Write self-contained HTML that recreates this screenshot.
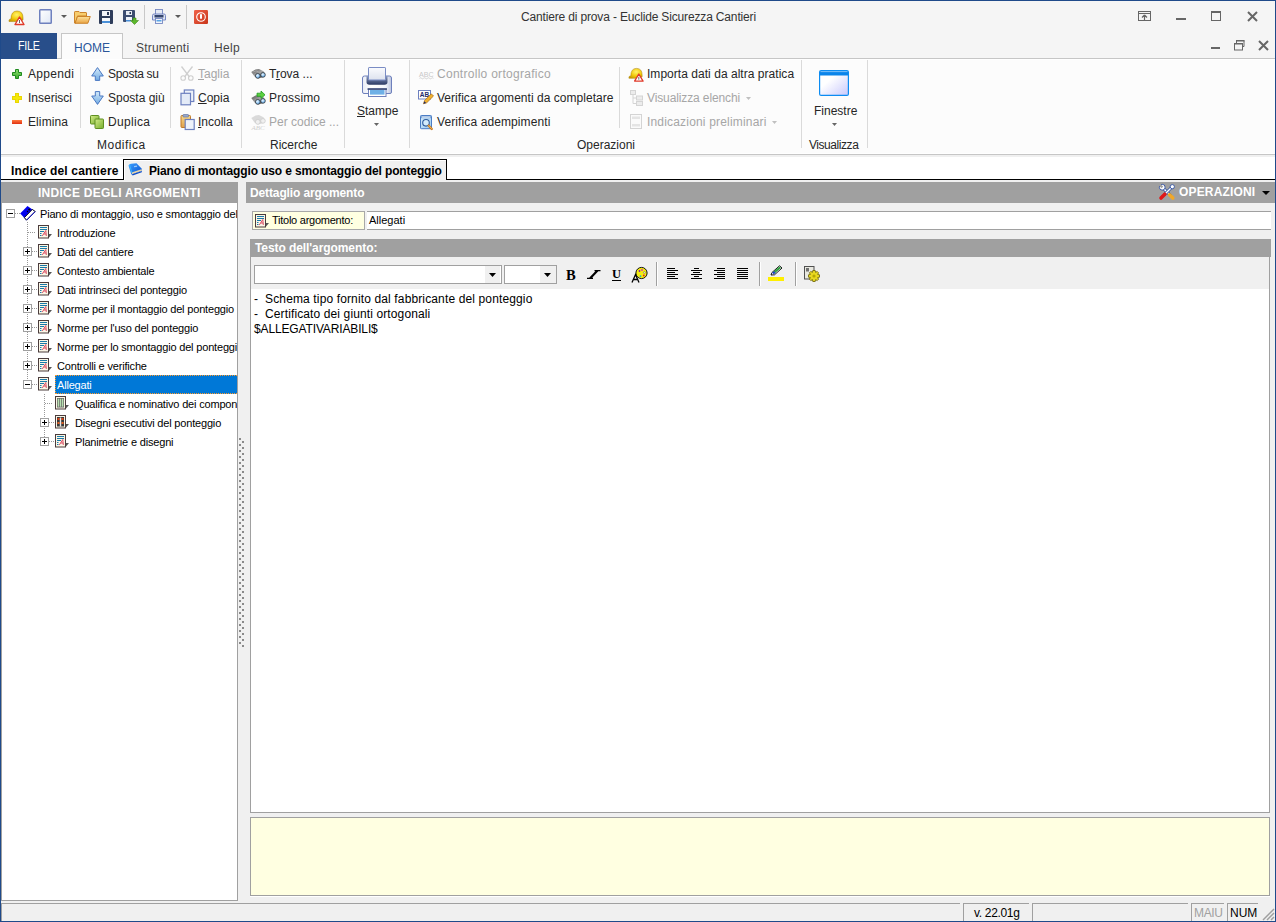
<!DOCTYPE html>
<html><head><meta charset="utf-8">
<style>
*{margin:0;padding:0;box-sizing:border-box}
html,body{width:1276px;height:922px;overflow:hidden;background:#f0f0f0;font-family:"Liberation Sans",sans-serif;font-size:12px;color:#000}
body{position:relative}
.a{position:absolute;white-space:nowrap}
.r{font-size:12px;line-height:14px;color:#262626}
.dis{color:#a6a6a6}
.t{font-size:11px;line-height:13px;color:#000}
.hb{font-size:12px;font-weight:bold;line-height:14px;color:#fff}
svg{position:absolute;overflow:visible}
.ln{position:absolute;background:#dadada}
</style></head><body>
<!-- title bar + tab row -->
<div class="a" style="left:0;top:0;width:1276px;height:58px;background:#f5f5f5"></div>
<!-- ribbon body -->
<div class="a" style="left:0;top:58px;width:1276px;height:97px;background:#fcfcfc;border-top:1px solid #c6c6c6;border-bottom:1px solid #c6c6c6;box-shadow:inset 0 1px 0 #fff, inset 0 -1px 0 #fff"></div>

<!-- QAT icons -->
<svg style="left:8px;top:10px" width="17" height="15" viewBox="0 0 17 15">
  <defs><radialGradient id="hg" cx="0.55" cy="0.35" r="0.7"><stop offset="0" stop-color="#fff36a"/><stop offset="0.6" stop-color="#f2c90a"/><stop offset="1" stop-color="#c89a00"/></radialGradient></defs>
  <path d="M1 10.5 Q1 9 3 9 Q3 1 9 1 Q15 1 15 8 L15 10 Q11 12 1 11.5Z" fill="url(#hg)" stroke="#b08a10" stroke-width="0.6"/>
  <path d="M11.5 7 L16 14.5 L7 14.5Z" fill="#fff" stroke="#e03a2a" stroke-width="1.4" stroke-linejoin="round"/>
  <rect x="11" y="10" width="1" height="3" fill="#666"/>
</svg>
<svg style="left:39px;top:9px" width="13" height="15" viewBox="0 0 13 15">
  <defs><linearGradient id="ng" x1="0" y1="0" x2="1" y2="1"><stop offset="0" stop-color="#ffffff"/><stop offset="1" stop-color="#dfe7f5"/></linearGradient></defs>
  <rect x="0.75" y="0.75" width="11.5" height="13.5" rx="0.8" fill="url(#ng)" stroke="#6e80be" stroke-width="1.5"/>
</svg>
<svg style="left:61px;top:15px" width="6" height="3" viewBox="0 0 6 3"><path d="M0 0H6L3 3Z" fill="#5a5a5a"/></svg>
<svg style="left:74px;top:11px" width="17" height="13" viewBox="0 0 17 13">
  <defs><linearGradient id="fg" x1="0" y1="0" x2="0" y2="1"><stop offset="0" stop-color="#fde29a"/><stop offset="1" stop-color="#e9a446"/></linearGradient></defs>
  <path d="M0.5 1.2 Q0.5 0.5 1.2 0.5 H5 L6 1.5 H12 Q12.5 1.5 12.5 2 V5 H3.5 L1.5 12 H0.5Z" fill="#f7cd6e" stroke="#c77a1e" stroke-width="0.9"/>
  <path d="M3.5 5.5 H16.3 L13.8 12.3 H1Z" fill="url(#fg)" stroke="#c77a1e" stroke-width="0.9" stroke-linejoin="round"/>
</svg>
<svg style="left:99px;top:10px" width="14" height="14" viewBox="0 0 14 14">
  <rect x="0" y="0" width="14" height="14" rx="1" fill="#2e3c5a"/>
  <rect x="3" y="1" width="8" height="5" fill="#f2f4f8"/><rect x="8" y="2" width="2" height="3" fill="#2e3c5a"/>
  <rect x="3" y="8" width="8" height="6" fill="#f6f8fb"/><rect x="3" y="11" width="8" height="2" fill="#4a90d8"/>
</svg>
<svg style="left:123px;top:10px" width="16" height="15" viewBox="0 0 16 15">
  <rect x="0" y="0" width="12" height="12" rx="1" fill="#3c4d70"/>
  <rect x="3" y="1" width="6" height="4" fill="#e8ecf3"/><rect x="6.5" y="2" width="1.5" height="2" fill="#2e3c5a"/>
  <rect x="3" y="7" width="6" height="5" fill="#f0f4fa"/><rect x="3" y="10" width="5" height="1.5" fill="#4a90d8"/>
  <path d="M10 8 H13 V10.5 H15.5 L11.5 14.5 L7.5 10.5 H10Z" fill="#5cb82c" stroke="#3f8a1a" stroke-width="0.6"/>
</svg>
<div class="ln" style="left:144px;top:5px;width:1px;height:24px;background:#c8c8c8"></div>
<svg style="left:152px;top:9px" width="14" height="15" viewBox="0 0 14 15">
  <rect x="3.5" y="0.5" width="7" height="6" fill="#e6ebf5" stroke="#7688c2" stroke-width="0.9"/>
  <path d="M0.5 6.5 Q0.5 5 2 5 H12 Q13.5 5 13.5 6.5 V11 H0.5Z" fill="#dfe5f3" stroke="#6b7ebe" stroke-width="0.9"/>
  <rect x="2.5" y="6" width="9" height="2.5" fill="#34456e"/>
  <rect x="3.5" y="9.5" width="7" height="5" fill="#f2f5fb" stroke="#7688c2" stroke-width="0.9"/>
  <rect x="4.5" y="11" width="5" height="1.5" fill="#5aa6e6"/>
</svg>
<svg style="left:175px;top:15px" width="6" height="3" viewBox="0 0 6 3"><path d="M0 0H6L3 3Z" fill="#5a5a5a"/></svg>
<div class="ln" style="left:186px;top:5px;width:1px;height:24px;background:#c8c8c8"></div>
<svg style="left:194px;top:10px" width="14" height="14" viewBox="0 0 14 14">
  <defs><linearGradient id="pg" x1="0" y1="0" x2="1" y2="1"><stop offset="0" stop-color="#f0624a"/><stop offset="1" stop-color="#c8361a"/></linearGradient></defs>
  <rect x="0" y="0" width="14" height="14" rx="1.2" fill="url(#pg)"/>
  <circle cx="7" cy="7" r="4.3" fill="none" stroke="#fff" stroke-width="1.1"/>
  <rect x="6" y="4.2" width="2" height="4.5" fill="#fff"/>
</svg>

<!-- window title -->
<div class="a" id="title" style="letter-spacing:-0.156px;left:521px;top:10px;font-size:12px;line-height:14px;color:#333">Cantiere di prova - Euclide Sicurezza Cantieri</div>

<!-- window controls -->
<svg style="left:1138px;top:11px" width="14" height="11" viewBox="0 0 14 11">
  <rect x="0.5" y="0.5" width="12" height="9" fill="none" stroke="#666" stroke-width="1"/>
  <rect x="0.5" y="2" width="12" height="1" fill="#666"/>
  <path d="M6.5 4 L4 6.5 M6.5 4 L9 6.5 M6.5 4 V10" stroke="#666" stroke-width="1.2" fill="none"/>
</svg>
<div class="a" style="left:1176px;top:18px;width:10px;height:2px;background:#666"></div>
<svg style="left:1211px;top:11px" width="10" height="10" viewBox="0 0 10 10">
  <rect x="0.5" y="0.5" width="9" height="9" fill="none" stroke="#666" stroke-width="1"/>
  <rect x="0" y="0" width="10" height="2" fill="#666"/>
</svg>
<svg style="left:1247px;top:11px" width="11" height="11" viewBox="0 0 11 11">
  <path d="M1 1 L10 10 M10 1 L1 10" stroke="#666" stroke-width="2"/>
</svg>

<!-- FILE tab -->
<div class="a" style="left:0;top:33px;width:57px;height:26px;background:#284e8a"></div>
<div class="a" style="letter-spacing:-0.3px;left:18px;top:39px;color:#fff;font-size:12.5px;line-height:14px;transform:scaleX(0.86);transform-origin:left">FILE</div>
<!-- HOME tab -->
<div class="a" style="left:61px;top:33px;width:62px;height:26px;background:#fcfcfc;border:1px solid #c6c6c6;border-bottom:none"></div>
<div class="a" style="left:74px;top:41px;color:#2b579a;font-size:12px;line-height:14px">HOME</div>
<div class="a r" style="letter-spacing:0.212px;left:136px;top:41px;color:#444">Strumenti</div>
<div class="a r" style="letter-spacing:0.3px;left:214px;top:41px;color:#444">Help</div>

<!-- MDI controls -->
<div class="a" style="left:1211px;top:47px;width:9px;height:2px;background:#666"></div>
<svg style="left:1234px;top:40px" width="11" height="11" viewBox="0 0 11 11">
  <path d="M2.5 3 V0.5 H10 V6.5 H8.5" fill="none" stroke="#666" stroke-width="1"/>
  <rect x="2" y="0" width="8.5" height="1.5" fill="#666"/>
  <rect x="0.5" y="3.5" width="8" height="6.5" fill="#f5f5f5" stroke="#666" stroke-width="1"/>
  <rect x="0" y="3" width="9" height="1.5" fill="#666"/>
</svg>
<svg style="left:1258px;top:40px" width="11" height="11" viewBox="0 0 11 11">
  <path d="M1 1 L10 10 M10 1 L1 10" stroke="#666" stroke-width="2"/>
</svg>

<!-- ribbon group separators -->
<div class="ln" style="left:241px;top:60px;width:1px;height:88px"></div>
<div class="ln" style="left:344px;top:60px;width:1px;height:88px"></div>
<div class="ln" style="left:409px;top:60px;width:1px;height:88px"></div>
<div class="ln" style="left:801px;top:60px;width:1px;height:88px"></div>
<div class="ln" style="left:867px;top:60px;width:1px;height:88px"></div>
<div class="ln" style="left:80px;top:67px;width:1px;height:61px"></div>
<div class="ln" style="left:170px;top:67px;width:1px;height:61px"></div>
<div class="ln" style="left:619px;top:67px;width:1px;height:61px"></div>

<!-- Appendi plus -->
<svg style="left:12px;top:69px" width="10" height="10" viewBox="0 0 10 10">
  <defs><linearGradient id="gp" x1="0" y1="0" x2="0" y2="1"><stop offset="0" stop-color="#8de070"/><stop offset="1" stop-color="#3aa82a"/></linearGradient></defs>
  <path d="M3.5 0.5H6.5V3.5H9.5V6.5H6.5V9.5H3.5V6.5H0.5V3.5H3.5Z" fill="url(#gp)" stroke="#1f8a1f" stroke-width="1"/>
</svg>
<svg style="left:12px;top:93px" width="10" height="10" viewBox="0 0 10 10">
  <path d="M3 0H7V3H10V7H7V10H3V7H0V3H3Z" fill="#f4e80a"/>
  <path d="M3.5 0.5H6.5V3.5H9.5V6.5H6.5V9.5H3.5V6.5H0.5V3.5H3.5Z" fill="none" stroke="#e0c800" stroke-width="0.6"/>
</svg>
<svg style="left:12px;top:120px" width="10" height="4" viewBox="0 0 10 4">
  <defs><linearGradient id="gm" x1="0" y1="0" x2="0" y2="1"><stop offset="0" stop-color="#ff7a40"/><stop offset="1" stop-color="#e03010"/></linearGradient></defs>
  <rect x="0" y="0" width="10" height="4" fill="url(#gm)"/>
</svg>
<!-- up / down arrows -->
<svg style="left:91px;top:67px" width="13" height="14" viewBox="0 0 13 14">
  <defs><linearGradient id="ga" x1="0" y1="0" x2="0" y2="1"><stop offset="0" stop-color="#d6ecfb"/><stop offset="1" stop-color="#6fa9e2"/></linearGradient></defs>
  <path d="M6.5 0.6 L12.3 9 H8.7 V13.4 H4.3 V9 H0.7Z" fill="url(#ga)" stroke="#4a78c2" stroke-width="1" stroke-linejoin="round"/>
</svg>
<svg style="left:91px;top:91px" width="13" height="14" viewBox="0 0 13 14">
  <path d="M4.3 0.6 H8.7 V5 H12.3 L6.5 13.4 L0.7 5 H4.3Z" fill="url(#ga)" stroke="#4a78c2" stroke-width="1" stroke-linejoin="round"/>
</svg>
<!-- duplica -->
<svg style="left:90px;top:115px" width="14" height="14" viewBox="0 0 14 14">
  <defs><linearGradient id="gd" x1="0" y1="0" x2="1" y2="1"><stop offset="0" stop-color="#d4ec8a"/><stop offset="1" stop-color="#76ad2c"/></linearGradient></defs>
  <rect x="0.5" y="0.5" width="8.5" height="8.5" rx="0.8" fill="url(#gd)" stroke="#5f8f22" stroke-width="1"/>
  <rect x="5" y="4" width="8.5" height="9.5" rx="0.8" fill="url(#gd)" stroke="#5f8f22" stroke-width="1"/>
</svg>
<!-- scissors (disabled) -->
<svg style="left:180px;top:66px" width="14" height="15" viewBox="0 0 14 15">
  <path d="M1.5 0.5 L9.5 11 M12.5 0.5 L4.5 11" stroke="#cfcfcf" stroke-width="1.3" fill="none"/>
  <circle cx="3.2" cy="12" r="2.3" fill="none" stroke="#cfcfcf" stroke-width="1.1"/>
  <circle cx="10.8" cy="12" r="2.3" fill="none" stroke="#cfcfcf" stroke-width="1.1"/>
</svg>
<!-- copy -->
<svg style="left:180px;top:89px" width="15" height="17" viewBox="0 0 15 17">
  <rect x="4.3" y="1" width="9.5" height="11.5" fill="#eef2fa" stroke="#6d80bf" stroke-width="1.2"/>
  <rect x="1" y="4.3" width="9.5" height="11.5" fill="#e4ebf7" stroke="#6d80bf" stroke-width="1.2"/>
</svg>
<!-- paste -->
<svg style="left:180px;top:114px" width="15" height="16" viewBox="0 0 15 16">
  <defs><linearGradient id="gc" x1="0" y1="0" x2="0" y2="1"><stop offset="0" stop-color="#f7d88a"/><stop offset="1" stop-color="#e0a04a"/></linearGradient></defs>
  <rect x="1" y="1.5" width="9.5" height="12" rx="0.8" fill="url(#gc)" stroke="#c07a2a" stroke-width="1"/>
  <rect x="3" y="0.5" width="5.5" height="2.5" rx="0.6" fill="#9aa8c8" stroke="#6478a8" stroke-width="0.7"/>
  <rect x="5.2" y="5.5" width="9" height="10" fill="#eef2fa" stroke="#6d80bf" stroke-width="1.2"/>
</svg>
<!-- binoculars -->
<svg style="left:251px;top:69px" width="15" height="10" viewBox="0 0 15 10">
  <defs><linearGradient id="gbn" x1="0" y1="0" x2="1" y2="1"><stop offset="0" stop-color="#505050"/><stop offset="0.5" stop-color="#a8a8a8"/><stop offset="1" stop-color="#404040"/></linearGradient>
  <radialGradient id="gln" cx="0.4" cy="0.35" r="0.7"><stop offset="0" stop-color="#e8f6ff"/><stop offset="1" stop-color="#5aa8ee"/></radialGradient></defs>
  <path d="M0.3 3 L4.5 0.6 L8 0 L12.5 2.2 L14.2 5 L13 8 L7 9.6 L3.5 7.5Z" fill="url(#gbn)"/>
  <path d="M1.5 3.2 L5 1.8 L7.5 2.8" stroke="#b8b8b8" stroke-width="0.7" fill="none"/>
  <circle cx="6.8" cy="6.9" r="2.4" fill="url(#gln)" stroke="#222" stroke-width="0.7"/>
  <circle cx="12" cy="5.9" r="2.3" fill="url(#gln)" stroke="#222" stroke-width="0.7"/>
</svg>
<svg style="left:251px;top:91px" width="15" height="14" viewBox="0 0 15 14">
  <path d="M0.3 7 L4.5 4.6 L8 4 L12.5 6.2 L14.2 9 L13 12 L7 13.6 L3.5 11.5Z" fill="url(#gbn)"/>
  <circle cx="6.8" cy="10.9" r="2.4" fill="url(#gln)" stroke="#222" stroke-width="0.7"/>
  <circle cx="12" cy="9.9" r="2.3" fill="url(#gln)" stroke="#222" stroke-width="0.7"/>
  <path d="M6 2.2 H10 V0 L14 3.8 L10 7.5 V5.3 H6Z" fill="#5ed040" stroke="#1f9a1f" stroke-width="0.8"/>
</svg>
<svg style="left:251px;top:115px" width="15" height="15" viewBox="0 0 15 15">
  <path d="M0.3 3 L4.5 0.6 L8 0 L12.5 2.2 L14.2 5 L13 8 L7 9.6 L3.5 7.5Z" fill="#dadada"/>
  <circle cx="6.8" cy="6.9" r="2.4" fill="#f0f0f0" stroke="#c8c8c8" stroke-width="0.7"/>
  <circle cx="12" cy="5.9" r="2.3" fill="#f0f0f0" stroke="#c8c8c8" stroke-width="0.7"/>
  <text x="0.5" y="14.5" font-family="Liberation Serif" font-size="7" font-style="italic" fill="#cfcfcf">ABC</text>
</svg>
<!-- big printer -->
<svg style="left:362px;top:67px" width="30" height="30" viewBox="0 0 30 30">
  <defs>
    <linearGradient id="gpb" x1="0" y1="0" x2="1" y2="0"><stop offset="0" stop-color="#e8ecf6"/><stop offset="0.3" stop-color="#ffffff"/><stop offset="0.8" stop-color="#f4f6fb"/><stop offset="1" stop-color="#b8c2de"/></linearGradient>
    <linearGradient id="gps" x1="0" y1="0" x2="0" y2="1"><stop offset="0" stop-color="#8a9ac0"/><stop offset="1" stop-color="#2a3862"/></linearGradient>
    <linearGradient id="gpp" x1="0" y1="0" x2="0" y2="1"><stop offset="0" stop-color="#fafbfe"/><stop offset="1" stop-color="#dde2ee"/></linearGradient>
  </defs>
  <path d="M0.5 11 Q0.5 9 2.5 9 H27.5 Q29.5 9 29.5 11 V25 Q29.5 26.5 28 26.5 H2 Q0.5 26.5 0.5 25Z" fill="url(#gpb)" stroke="#6e80bc" stroke-width="1"/>
  <path d="M4.5 9 H25.5 V15 Q25.5 17.8 22.5 17.8 H7.5 Q4.5 17.8 4.5 15Z" fill="url(#gps)"/>
  <rect x="6.5" y="0.5" width="17" height="12.5" rx="0.6" fill="url(#gpp)" stroke="#7a8cc4" stroke-width="1"/>
  <rect x="6.5" y="22" width="17.5" height="7.5" fill="#fff" stroke="#6e80bc" stroke-width="1"/>
  <rect x="8" y="23" width="14.5" height="4.6" fill="#6eb0e6"/>
  <rect x="5.5" y="21.3" width="19.5" height="1.5" fill="#34426e"/>
</svg>
<!-- ABC spell (disabled) -->
<svg style="left:419px;top:70px" width="15" height="9" viewBox="0 0 15 9">
  <text x="0" y="7" font-family="Liberation Sans" font-size="8" fill="#c8c8c8" textLength="14.5" lengthAdjust="spacingAndGlyphs">ABC</text>
  <path d="M0.5 8.3 q1 -1 2 0 t2 0 t2 0 t2 0 t2 0 t2 0 t2 0" stroke="#c8c8c8" stroke-width="0.8" fill="none"/>
</svg>
<!-- AB pencil -->
<svg style="left:418px;top:90px" width="16" height="15" viewBox="0 0 16 15">
  <rect x="0.5" y="0.5" width="12" height="8.5" fill="#fff" stroke="#6d80bf" stroke-width="1"/>
  <text x="1.8" y="7.3" font-family="Liberation Sans" font-weight="bold" font-size="6.5" fill="#1e2a6a">AB</text>
  <path d="M5.5 13.8 L6.5 10.6 L13.3 3.8 L15.5 6 L8.7 12.8Z" fill="#f0b030" stroke="#a86a10" stroke-width="0.7"/>
  <path d="M5.5 13.8 L6.3 11.2 L8.1 13Z" fill="#1e2a6a"/>
</svg>
<!-- verifica adempimenti -->
<svg style="left:420px;top:115px" width="14" height="16" viewBox="0 0 14 16">
  <defs><linearGradient id="gva" x1="0" y1="0" x2="1" y2="1"><stop offset="0" stop-color="#d8eefc"/><stop offset="1" stop-color="#9ccaf0"/></linearGradient></defs>
  <rect x="0.5" y="0.5" width="11" height="13.2" rx="0.8" fill="url(#gva)" stroke="#4a7cc4" stroke-width="1"/>
  <rect x="1" y="1" width="10" height="2.2" fill="#7aa4d8"/><rect x="1.8" y="1.6" width="8.4" height="0.9" fill="#fff"/>
  <circle cx="6" cy="7.8" r="3.3" fill="#d4ecfc" stroke="#2e5a9a" stroke-width="1.1"/>
  <path d="M8.6 10.6 L11.8 14" stroke="#c8781e" stroke-width="2.2" stroke-linecap="round"/>
  <path d="M8.8 10.6 L11.4 13.4" stroke="#f4c060" stroke-width="0.9" stroke-linecap="round"/>
</svg>
<!-- helmet big -->
<svg style="left:628px;top:67px" width="16" height="15" viewBox="0 0 17 15">
  <path d="M1 10.5 Q1 9 3 9 Q3 1 9 1 Q15 1 15 8 L15 10 Q11 12 1 11.5Z" fill="url(#hg)" stroke="#b08a10" stroke-width="0.6"/>
  <path d="M11.5 7 L16 14.5 L7 14.5Z" fill="#fff" stroke="#e03a2a" stroke-width="1.4" stroke-linejoin="round"/>
  <rect x="11" y="10" width="1" height="3" fill="#666"/>
</svg>
<!-- tree icon disabled -->
<svg style="left:630px;top:90px" width="13" height="16" viewBox="0 0 13 16">
  <rect x="0.5" y="0.5" width="5" height="4" fill="#ececec" stroke="#d4d4d4" stroke-width="1"/>
  <rect x="6.5" y="6" width="6" height="4" fill="#ececec" stroke="#d4d4d4" stroke-width="1"/>
  <rect x="6.5" y="11.5" width="6" height="4" fill="#ececec" stroke="#d4d4d4" stroke-width="1"/>
  <path d="M3 4.5 V13.5 H6.5 M3 8 H6.5" stroke="#d4d4d4" stroke-width="1" fill="none"/>
</svg>
<!-- doc icon disabled -->
<svg style="left:630px;top:114px" width="12" height="15" viewBox="0 0 12 15">
  <rect x="0.5" y="0.5" width="11" height="14" fill="#fafafa" stroke="#d4d4d4" stroke-width="1"/>
  <rect x="2" y="2.5" width="8" height="2.5" fill="#e4e4e4"/>
  <rect x="2" y="10" width="8" height="2.5" fill="#e4e4e4"/>
</svg>
<!-- finestre -->
<svg style="left:819px;top:70px" width="30" height="26" viewBox="0 0 30 26">
  <defs><linearGradient id="gw" x1="0.2" y1="0.2" x2="1" y2="1"><stop offset="0.2" stop-color="#ffffff"/><stop offset="1" stop-color="#c8c8fc"/></linearGradient></defs>
  <rect x="0.6" y="0.6" width="28.8" height="24.8" rx="1.5" fill="url(#gw)" stroke="#0c8cf2" stroke-width="1.2"/>
  <rect x="1" y="1" width="28" height="4.5" fill="#0a84ea"/>
  <rect x="1.5" y="1.3" width="27" height="0.8" fill="#9fd0fa"/>
</svg>


<!-- ribbon labels -->
<div class="a r" style="letter-spacing:0.333px;left:28px;top:67px">Appendi</div>
<div class="a r" style="letter-spacing:0.0px;left:28px;top:91px">Inserisci</div>
<div class="a r" style="letter-spacing:0.1px;left:28px;top:115px">Elimina</div>
<div class="a r" style="letter-spacing:-0.3px;left:108px;top:67px">Sposta su</div>
<div class="a r" style="letter-spacing:0.0px;left:108px;top:91px">Sposta giù</div>
<div class="a r" style="letter-spacing:0.333px;left:108px;top:115px">Duplica</div>
<div class="a r dis" style="left:198px;top:67px"><u>T</u>aglia</div>
<div class="a r" style="left:198px;top:91px"><u>C</u>opia</div>
<div class="a r" style="left:198px;top:115px"><u>I</u>ncolla</div>
<div class="a r" style="letter-spacing:0.486px;left:97px;top:138px">Modifica</div>

<div class="a r" style="left:269px;top:67px">T<u>r</u>ova ...</div>
<div class="a r" style="letter-spacing:0.143px;left:269px;top:91px">Prossimo</div>
<div class="a r dis" style="letter-spacing:0.0px;left:269px;top:115px">Per codice ...</div>
<div class="a r" style="letter-spacing:0.0px;left:270px;top:138px">Ricerche</div>

<div class="a r" style="left:357px;top:104px"><u>S</u>tampe</div>
<svg style="left:374px;top:123px" width="5" height="3" viewBox="0 0 5 3"><path d="M0 0H5L2.5 3Z" fill="#666"/></svg>

<div class="a r dis" style="letter-spacing:0.28px;left:437px;top:67px">Controllo ortografico</div>
<div class="a r" style="letter-spacing:0.032px;left:437px;top:91px">Verifica argomenti da completare</div>
<div class="a r" style="letter-spacing:0.105px;left:437px;top:115px">Verifica adempimenti</div>
<div class="a r" style="letter-spacing:0.036px;left:647px;top:67px">Importa dati da altra pratica</div>
<div class="a r dis" style="letter-spacing:-0.118px;left:647px;top:91px">Visualizza elenchi</div>
<svg style="left:746px;top:97px" width="5" height="3" viewBox="0 0 5 3"><path d="M0 0H5L2.5 3Z" fill="#c0c0c0"/></svg>
<div class="a r dis" style="letter-spacing:0.182px;left:647px;top:115px">Indicazioni preliminari</div>
<svg style="left:772px;top:121px" width="5" height="3" viewBox="0 0 5 3"><path d="M0 0H5L2.5 3Z" fill="#c0c0c0"/></svg>
<div class="a r" style="letter-spacing:0.0px;left:577px;top:138px">Operazioni</div>

<div class="a r" style="letter-spacing:0.0px;left:814px;top:104px">Finestre</div>
<svg style="left:832px;top:123px" width="5" height="3" viewBox="0 0 5 3"><path d="M0 0H5L2.5 3Z" fill="#666"/></svg>
<div class="a r" style="letter-spacing:-0.444px;left:809px;top:138px">Visualizza</div>

<!-- doc tab strip -->
<div class="a" style="left:1px;top:157px;width:1274px;height:23px;background:#fff"></div>
<div class="a" style="left:1px;top:179px;width:1274px;height:1px;background:#000"></div>
<div class="a" style="left:123px;top:159px;width:324px;height:21px;background:#f0f0f0;border:1px solid #000;border-bottom:none;box-shadow:inset 1px 1px 0 #fff"></div>
<svg style="left:128px;top:163px" width="15" height="13" viewBox="0 0 15 13">
 <defs><linearGradient id="gbk" x1="0" y1="0" x2="1" y2="1"><stop offset="0" stop-color="#3aa0ff"/><stop offset="1" stop-color="#0a50d0"/></linearGradient></defs>
 <path d="M0.5 2.5 Q1.5 0.8 3 0.8 L8.5 0.3 L13.8 5.8 L13.5 8 L4.5 11.5 Q3.5 11.8 3.2 11Z" fill="url(#gbk)"/>
 <path d="M3.5 9.6 L13.5 6.2 L13.8 7.8 L4.2 11.2Z" fill="#e8d4a8"/>
 <path d="M4 11.3 L14 8 L13.8 9.3 L4.6 12.6Z" fill="#0a4ac8"/>
 <path d="M1.5 1.8 L4 10" stroke="#40c0ff" stroke-width="0.8"/>
 <rect x="6" y="2.8" width="3" height="1.2" fill="#9ccaf8" transform="rotate(-8 7 3)"/>
</svg>
<div class="a" style="letter-spacing:0.15px;left:11px;top:164px;font-size:12px;font-weight:bold;line-height:14px">Indice del cantiere</div>
<div class="a" style="letter-spacing:-0.135px;left:149px;top:164px;font-size:12px;font-weight:bold;line-height:14px">Piano di montaggio uso e smontaggio del ponteggio</div>

<!-- left panel -->
<div class="a" style="left:1px;top:182px;width:237px;height:21px;background:#a0a0a0"></div>
<div class="a hb" style="letter-spacing:0.26px;left:38px;top:186px">INDICE DEGLI ARGOMENTI</div>
<div class="a" style="left:1px;top:203px;width:237px;height:698px;background:#fff;border-left:1px solid #a0a0a0;border-right:1px solid #a0a0a0;border-bottom:1px solid #a0a0a0"></div>
<svg width="0" height="0" style="position:absolute;left:0;top:0"><defs>
<g id="docic"><rect x="0.5" y="0.5" width="10" height="12.5" fill="#fbf6e6" stroke="#4a3c3c" stroke-width="1"/>
<rect x="2" y="2" width="7" height="1" fill="#1a7aa8"/><rect x="2" y="4" width="7" height="1" fill="#1a7aa8"/><rect x="2" y="6" width="4" height="1" fill="#1a7aa8"/><rect x="2" y="8" width="1.5" height="1" fill="#1a7aa8"/><rect x="2" y="10" width="1.5" height="1" fill="#1a7aa8"/>
<path d="M4.3 11 L7.8 5.5 L8.3 11 M5.8 9 H8.2" stroke="#d8405a" stroke-width="0.9" fill="none"/>
<path d="M11 9 L14 9 L11 12.5Z" fill="#555"/></g>
<g id="gridic"><rect x="0.5" y="0.5" width="10" height="12.5" fill="#fbf6e6" stroke="#4a3c3c" stroke-width="1"/>
<rect x="2" y="2" width="7" height="9.5" fill="#666"/><rect x="2.7" y="2.7" width="1.4" height="8" fill="#b8e0b0"/><rect x="4.8" y="2.7" width="1.4" height="8" fill="#b8e0b0"/><rect x="6.9" y="2.7" width="1.4" height="8" fill="#b8e0b0"/>
<path d="M11 9 L14 9 L11 12.5Z" fill="#555"/></g>
<g id="drawic"><rect x="0.5" y="0.5" width="10" height="12.5" fill="#fbf6e6" stroke="#4a3c3c" stroke-width="1"/>
<rect x="2" y="2" width="7" height="9.5" fill="#3a3a3a"/><rect x="2.5" y="3" width="2" height="2" fill="#e04010"/><rect x="6.5" y="3" width="2" height="2" fill="#e04010"/><rect x="2.5" y="7" width="2" height="2" fill="#e86020"/><rect x="6.5" y="7" width="2" height="2" fill="#e86020"/><rect x="4.8" y="2.5" width="1.4" height="9" fill="#e8e8e8"/>
<path d="M11 9 L14 9 L11 12.5Z" fill="#555"/></g>
</defs></svg>
<div class="a" style="left:2px;top:203px;width:235px;height:697px;overflow:hidden">
<div class="a" style="left:25px;top:19px;width:1px;height:163px;background:repeating-linear-gradient(to bottom,#999 0 1px,transparent 1px 2px)"></div>
<div class="a" style="left:42px;top:191px;width:1px;height:48px;background:repeating-linear-gradient(to bottom,#999 0 1px,transparent 1px 2px)"></div>
<div class="a" style="left:13px;top:10px;width:5px;height:1px;background:repeating-linear-gradient(to right,#999 0 1px,transparent 1px 2px)"></div>
<div class="a" style="left:4px;top:6px;width:9px;height:9px;border:1px solid #a0a0a0;background:#fff"><div class="a" style="left:1px;top:3px;width:5px;height:1px;background:#000"></div></div>
<svg style="left:18px;top:2px" width="16" height="16" viewBox="0 0 16 16">
 <path d="M0.2 8.5 L7.5 1 L15.2 6.5 L6.5 15.2Z" fill="#0000f0"/>
 <path d="M12.3 4.4 L15.2 6.5 L6.5 15.2 L4.4 12.6Z" fill="#fff" stroke="#000" stroke-width="0.9" stroke-linejoin="round"/>
 <path d="M15.2 6.5 L6.5 15.2" stroke="#0000f0" stroke-width="0.8"/>
 <circle cx="9.2" cy="4.5" r="1" fill="#000"/><circle cx="7.5" cy="6.5" r="0.7" fill="#000"/>
</svg>
<div class="a t" id="tr0" style="letter-spacing:-0.18px;left:38px;top:5px">Piano di montaggio, uso e smontaggio del ponteggio</div>
<div class="a" style="left:26px;top:29px;width:8px;height:1px;background:repeating-linear-gradient(to right,#999 0 1px,transparent 1px 2px)"></div>
<svg style="left:36px;top:22px" width="15" height="14" viewBox="0 0 15 14"><use href="#docic"/></svg>
<div class="a t" id="tr1" style="letter-spacing:-0.18px;left:55px;top:24px">Introduzione</div>
<div class="a" style="left:30px;top:48px;width:6px;height:1px;background:repeating-linear-gradient(to right,#999 0 1px,transparent 1px 2px)"></div>
<div class="a" style="left:21px;top:44px;width:9px;height:9px;border:1px solid #a0a0a0;background:#fff"><div class="a" style="left:1px;top:3px;width:5px;height:1px;background:#000"></div><div class="a" style="left:3px;top:1px;width:1px;height:5px;background:#000"></div></div>
<svg style="left:36px;top:41px" width="15" height="14" viewBox="0 0 15 14"><use href="#docic"/></svg>
<div class="a t" id="tr2" style="letter-spacing:-0.18px;left:55px;top:43px">Dati del cantiere</div>
<div class="a" style="left:30px;top:67px;width:6px;height:1px;background:repeating-linear-gradient(to right,#999 0 1px,transparent 1px 2px)"></div>
<div class="a" style="left:21px;top:63px;width:9px;height:9px;border:1px solid #a0a0a0;background:#fff"><div class="a" style="left:1px;top:3px;width:5px;height:1px;background:#000"></div><div class="a" style="left:3px;top:1px;width:1px;height:5px;background:#000"></div></div>
<svg style="left:36px;top:60px" width="15" height="14" viewBox="0 0 15 14"><use href="#docic"/></svg>
<div class="a t" id="tr3" style="letter-spacing:-0.18px;left:55px;top:62px">Contesto ambientale</div>
<div class="a" style="left:30px;top:86px;width:6px;height:1px;background:repeating-linear-gradient(to right,#999 0 1px,transparent 1px 2px)"></div>
<div class="a" style="left:21px;top:82px;width:9px;height:9px;border:1px solid #a0a0a0;background:#fff"><div class="a" style="left:1px;top:3px;width:5px;height:1px;background:#000"></div><div class="a" style="left:3px;top:1px;width:1px;height:5px;background:#000"></div></div>
<svg style="left:36px;top:79px" width="15" height="14" viewBox="0 0 15 14"><use href="#docic"/></svg>
<div class="a t" id="tr4" style="letter-spacing:-0.18px;left:55px;top:81px">Dati intrinseci del ponteggio</div>
<div class="a" style="left:30px;top:105px;width:6px;height:1px;background:repeating-linear-gradient(to right,#999 0 1px,transparent 1px 2px)"></div>
<div class="a" style="left:21px;top:101px;width:9px;height:9px;border:1px solid #a0a0a0;background:#fff"><div class="a" style="left:1px;top:3px;width:5px;height:1px;background:#000"></div><div class="a" style="left:3px;top:1px;width:1px;height:5px;background:#000"></div></div>
<svg style="left:36px;top:98px" width="15" height="14" viewBox="0 0 15 14"><use href="#docic"/></svg>
<div class="a t" id="tr5" style="letter-spacing:-0.18px;left:55px;top:100px">Norme per il montaggio del ponteggio</div>
<div class="a" style="left:30px;top:124px;width:6px;height:1px;background:repeating-linear-gradient(to right,#999 0 1px,transparent 1px 2px)"></div>
<div class="a" style="left:21px;top:120px;width:9px;height:9px;border:1px solid #a0a0a0;background:#fff"><div class="a" style="left:1px;top:3px;width:5px;height:1px;background:#000"></div><div class="a" style="left:3px;top:1px;width:1px;height:5px;background:#000"></div></div>
<svg style="left:36px;top:117px" width="15" height="14" viewBox="0 0 15 14"><use href="#docic"/></svg>
<div class="a t" id="tr6" style="letter-spacing:-0.18px;left:55px;top:119px">Norme per l'uso del ponteggio</div>
<div class="a" style="left:30px;top:143px;width:6px;height:1px;background:repeating-linear-gradient(to right,#999 0 1px,transparent 1px 2px)"></div>
<div class="a" style="left:21px;top:139px;width:9px;height:9px;border:1px solid #a0a0a0;background:#fff"><div class="a" style="left:1px;top:3px;width:5px;height:1px;background:#000"></div><div class="a" style="left:3px;top:1px;width:1px;height:5px;background:#000"></div></div>
<svg style="left:36px;top:136px" width="15" height="14" viewBox="0 0 15 14"><use href="#docic"/></svg>
<div class="a t" id="tr7" style="letter-spacing:-0.18px;left:55px;top:138px">Norme per lo smontaggio del ponteggio</div>
<div class="a" style="left:30px;top:162px;width:6px;height:1px;background:repeating-linear-gradient(to right,#999 0 1px,transparent 1px 2px)"></div>
<div class="a" style="left:21px;top:158px;width:9px;height:9px;border:1px solid #a0a0a0;background:#fff"><div class="a" style="left:1px;top:3px;width:5px;height:1px;background:#000"></div><div class="a" style="left:3px;top:1px;width:1px;height:5px;background:#000"></div></div>
<svg style="left:36px;top:155px" width="15" height="14" viewBox="0 0 15 14"><use href="#docic"/></svg>
<div class="a t" id="tr8" style="letter-spacing:-0.18px;left:55px;top:157px">Controlli e verifiche</div>
<div class="a" style="left:30px;top:181px;width:6px;height:1px;background:repeating-linear-gradient(to right,#999 0 1px,transparent 1px 2px)"></div>
<div class="a" style="left:21px;top:177px;width:9px;height:9px;border:1px solid #a0a0a0;background:#fff"><div class="a" style="left:1px;top:3px;width:5px;height:1px;background:#000"></div></div>
<svg style="left:36px;top:174px" width="15" height="14" viewBox="0 0 15 14"><use href="#docic"/></svg>
<div class="a" style="left:53px;top:172px;width:190px;height:19px;background:#0078d7;border:1px dotted #ff9a2a"></div>
<div class="a t" id="tr9" style="letter-spacing:-0.18px;left:55px;top:176px;color:#fff">Allegati</div>
<div class="a" style="left:43px;top:200px;width:8px;height:1px;background:repeating-linear-gradient(to right,#999 0 1px,transparent 1px 2px)"></div>
<svg style="left:53px;top:193px" width="15" height="14" viewBox="0 0 15 14"><use href="#gridic"/></svg>
<div class="a t" id="tr10" style="letter-spacing:-0.18px;left:73px;top:195px">Qualifica e nominativo dei componenti</div>
<div class="a" style="left:47px;top:219px;width:6px;height:1px;background:repeating-linear-gradient(to right,#999 0 1px,transparent 1px 2px)"></div>
<div class="a" style="left:38px;top:215px;width:9px;height:9px;border:1px solid #a0a0a0;background:#fff"><div class="a" style="left:1px;top:3px;width:5px;height:1px;background:#000"></div><div class="a" style="left:3px;top:1px;width:1px;height:5px;background:#000"></div></div>
<svg style="left:53px;top:212px" width="15" height="14" viewBox="0 0 15 14"><use href="#drawic"/></svg>
<div class="a t" id="tr11" style="letter-spacing:-0.18px;left:73px;top:214px">Disegni esecutivi del ponteggio</div>
<div class="a" style="left:47px;top:238px;width:6px;height:1px;background:repeating-linear-gradient(to right,#999 0 1px,transparent 1px 2px)"></div>
<div class="a" style="left:38px;top:234px;width:9px;height:9px;border:1px solid #a0a0a0;background:#fff"><div class="a" style="left:1px;top:3px;width:5px;height:1px;background:#000"></div><div class="a" style="left:3px;top:1px;width:1px;height:5px;background:#000"></div></div>
<svg style="left:53px;top:231px" width="15" height="14" viewBox="0 0 15 14"><use href="#docic"/></svg>
<div class="a t" id="tr12" style="letter-spacing:-0.18px;left:73px;top:233px">Planimetrie e disegni</div>
</div>

<!-- splitter grip -->
<div class="a" style="left:239px;top:438px;width:2px;height:2px;background:#8a8a8a"></div>
<div class="a" style="left:242px;top:441px;width:2px;height:2px;background:#8a8a8a"></div>
<div class="a" style="left:239px;top:444px;width:2px;height:2px;background:#8a8a8a"></div>
<div class="a" style="left:242px;top:447px;width:2px;height:2px;background:#8a8a8a"></div>
<div class="a" style="left:239px;top:450px;width:2px;height:2px;background:#8a8a8a"></div>
<div class="a" style="left:242px;top:453px;width:2px;height:2px;background:#8a8a8a"></div>
<div class="a" style="left:239px;top:456px;width:2px;height:2px;background:#8a8a8a"></div>
<div class="a" style="left:242px;top:459px;width:2px;height:2px;background:#8a8a8a"></div>
<div class="a" style="left:239px;top:462px;width:2px;height:2px;background:#8a8a8a"></div>
<div class="a" style="left:242px;top:465px;width:2px;height:2px;background:#8a8a8a"></div>
<div class="a" style="left:239px;top:468px;width:2px;height:2px;background:#8a8a8a"></div>
<div class="a" style="left:242px;top:471px;width:2px;height:2px;background:#8a8a8a"></div>
<div class="a" style="left:239px;top:474px;width:2px;height:2px;background:#8a8a8a"></div>
<div class="a" style="left:242px;top:477px;width:2px;height:2px;background:#8a8a8a"></div>
<div class="a" style="left:239px;top:480px;width:2px;height:2px;background:#8a8a8a"></div>
<div class="a" style="left:242px;top:483px;width:2px;height:2px;background:#8a8a8a"></div>
<div class="a" style="left:239px;top:486px;width:2px;height:2px;background:#8a8a8a"></div>
<div class="a" style="left:242px;top:489px;width:2px;height:2px;background:#8a8a8a"></div>
<div class="a" style="left:239px;top:492px;width:2px;height:2px;background:#8a8a8a"></div>
<div class="a" style="left:242px;top:495px;width:2px;height:2px;background:#8a8a8a"></div>
<div class="a" style="left:239px;top:498px;width:2px;height:2px;background:#8a8a8a"></div>
<div class="a" style="left:242px;top:501px;width:2px;height:2px;background:#8a8a8a"></div>
<div class="a" style="left:239px;top:504px;width:2px;height:2px;background:#8a8a8a"></div>
<div class="a" style="left:242px;top:507px;width:2px;height:2px;background:#8a8a8a"></div>
<div class="a" style="left:239px;top:510px;width:2px;height:2px;background:#8a8a8a"></div>
<div class="a" style="left:242px;top:513px;width:2px;height:2px;background:#8a8a8a"></div>
<div class="a" style="left:239px;top:516px;width:2px;height:2px;background:#8a8a8a"></div>
<div class="a" style="left:242px;top:519px;width:2px;height:2px;background:#8a8a8a"></div>
<div class="a" style="left:239px;top:522px;width:2px;height:2px;background:#8a8a8a"></div>
<div class="a" style="left:242px;top:525px;width:2px;height:2px;background:#8a8a8a"></div>
<div class="a" style="left:239px;top:528px;width:2px;height:2px;background:#8a8a8a"></div>
<div class="a" style="left:242px;top:531px;width:2px;height:2px;background:#8a8a8a"></div>
<div class="a" style="left:239px;top:534px;width:2px;height:2px;background:#8a8a8a"></div>
<div class="a" style="left:242px;top:537px;width:2px;height:2px;background:#8a8a8a"></div>
<div class="a" style="left:239px;top:540px;width:2px;height:2px;background:#8a8a8a"></div>
<div class="a" style="left:242px;top:543px;width:2px;height:2px;background:#8a8a8a"></div>
<div class="a" style="left:239px;top:546px;width:2px;height:2px;background:#8a8a8a"></div>
<div class="a" style="left:242px;top:549px;width:2px;height:2px;background:#8a8a8a"></div>
<div class="a" style="left:239px;top:552px;width:2px;height:2px;background:#8a8a8a"></div>
<div class="a" style="left:242px;top:555px;width:2px;height:2px;background:#8a8a8a"></div>
<div class="a" style="left:239px;top:558px;width:2px;height:2px;background:#8a8a8a"></div>
<div class="a" style="left:242px;top:561px;width:2px;height:2px;background:#8a8a8a"></div>
<div class="a" style="left:239px;top:564px;width:2px;height:2px;background:#8a8a8a"></div>
<div class="a" style="left:242px;top:567px;width:2px;height:2px;background:#8a8a8a"></div>
<div class="a" style="left:239px;top:570px;width:2px;height:2px;background:#8a8a8a"></div>
<div class="a" style="left:242px;top:573px;width:2px;height:2px;background:#8a8a8a"></div>
<div class="a" style="left:239px;top:576px;width:2px;height:2px;background:#8a8a8a"></div>
<div class="a" style="left:242px;top:579px;width:2px;height:2px;background:#8a8a8a"></div>
<div class="a" style="left:239px;top:582px;width:2px;height:2px;background:#8a8a8a"></div>
<div class="a" style="left:242px;top:585px;width:2px;height:2px;background:#8a8a8a"></div>
<div class="a" style="left:239px;top:588px;width:2px;height:2px;background:#8a8a8a"></div>
<div class="a" style="left:242px;top:591px;width:2px;height:2px;background:#8a8a8a"></div>
<div class="a" style="left:239px;top:594px;width:2px;height:2px;background:#8a8a8a"></div>
<div class="a" style="left:242px;top:597px;width:2px;height:2px;background:#8a8a8a"></div>
<div class="a" style="left:239px;top:600px;width:2px;height:2px;background:#8a8a8a"></div>
<div class="a" style="left:242px;top:603px;width:2px;height:2px;background:#8a8a8a"></div>
<div class="a" style="left:239px;top:606px;width:2px;height:2px;background:#8a8a8a"></div>
<div class="a" style="left:242px;top:609px;width:2px;height:2px;background:#8a8a8a"></div>
<div class="a" style="left:239px;top:612px;width:2px;height:2px;background:#8a8a8a"></div>
<div class="a" style="left:242px;top:615px;width:2px;height:2px;background:#8a8a8a"></div>
<div class="a" style="left:239px;top:618px;width:2px;height:2px;background:#8a8a8a"></div>
<div class="a" style="left:242px;top:621px;width:2px;height:2px;background:#8a8a8a"></div>
<div class="a" style="left:239px;top:624px;width:2px;height:2px;background:#8a8a8a"></div>
<div class="a" style="left:242px;top:627px;width:2px;height:2px;background:#8a8a8a"></div>
<div class="a" style="left:239px;top:630px;width:2px;height:2px;background:#8a8a8a"></div>
<div class="a" style="left:242px;top:633px;width:2px;height:2px;background:#8a8a8a"></div>
<div class="a" style="left:239px;top:636px;width:2px;height:2px;background:#8a8a8a"></div>
<div class="a" style="left:242px;top:639px;width:2px;height:2px;background:#8a8a8a"></div>
<div class="a" style="left:239px;top:642px;width:2px;height:2px;background:#8a8a8a"></div>
<div class="a" style="left:242px;top:645px;width:2px;height:2px;background:#8a8a8a"></div>

<!-- right panel -->
<div class="a" style="left:246px;top:182px;width:1029px;height:21px;background:#a0a0a0"></div>
<div class="a hb" style="letter-spacing:-0.12px;left:250px;top:186px">Dettaglio argomento</div>

<svg style="left:1159px;top:184px" width="16" height="16" viewBox="0 0 16 16">
 <path d="M3.5 3.5 L12 12" stroke="#3050a0" stroke-width="3"/><path d="M3.5 3.5 L12 12" stroke="#fff" stroke-width="1.6"/>
 <circle cx="3.2" cy="3.2" r="2.9" fill="#fff" stroke="#3050a0" stroke-width="0.9"/>
 <path d="M0.5 0.5 L3.4 3.4" stroke="#a0a0a0" stroke-width="2.2"/>
 <path d="M13 3 L5 11" stroke="#3050a0" stroke-width="2.8"/><path d="M13 3 L5 11" stroke="#fff" stroke-width="1.4"/>
 <circle cx="13.3" cy="2.7" r="2.1" fill="#fff" stroke="#3050a0" stroke-width="0.9"/>
 <path d="M5.8 10.2 L2 14" stroke="#e01818" stroke-width="3.6" stroke-linecap="round"/>
 <path d="M10.5 10.8 L13.8 14" stroke="#f0a828" stroke-width="3.6" stroke-linecap="round"/>
</svg>
<div class="a hb" style="letter-spacing:0.156px;left:1179px;top:185px">OPERAZIONI</div>
<svg style="left:1262px;top:191px" width="8" height="4" viewBox="0 0 8 4"><path d="M0 0H8L4 4Z" fill="#000"/></svg>

<div class="a" style="left:252px;top:211px;width:113px;height:19px;background:#ffffe1;border:1px solid #a8a8a8"></div>
<svg style="left:255px;top:214px" width="15" height="14" viewBox="0 0 15 14"><use href="#docic"/></svg>

<div class="a t" style="letter-spacing:-0.25px;left:272px;top:214px">Titolo argomento:</div>
<div class="a" style="left:367px;top:211px;width:904px;height:19px;background:#fff;border-top:1px solid #a0a0a0;border-bottom:1px solid #a0a0a0"></div>
<div class="a t" style="left:369px;top:214px">Allegati</div>

<div class="a" style="left:250px;top:239px;width:1021px;height:18px;background:#a0a0a0"></div>
<div class="a hb" style="letter-spacing:-0.08px;left:255px;top:241px">Testo dell'argomento:</div>
<div class="a" style="left:250px;top:257px;width:1020px;height:556px;background:#fff;border:1px solid #a0a0a0;border-top:none"></div>
<div class="a" style="left:251px;top:257px;width:1018px;height:32px;background:#f0f0f0"></div>
<div class="a" style="left:254px;top:265px;width:248px;height:19px;background:#fff;border:1px solid #a0a0a0"></div>
<div class="a" style="left:504px;top:265px;width:53px;height:19px;background:#fff;border:1px solid #a0a0a0"></div>

<div class="a" style="left:485px;top:266px;width:15px;height:17px;background:#f0f0f0"></div>
<svg style="left:489px;top:273px" width="7" height="4" viewBox="0 0 7 4"><path d="M0 0H7L3.5 4Z" fill="#000"/></svg>
<div class="a" style="left:540px;top:266px;width:16px;height:17px;background:#f0f0f0"></div>
<svg style="left:544px;top:273px" width="7" height="4" viewBox="0 0 7 4"><path d="M0 0H7L3.5 4Z" fill="#000"/></svg>
<div class="a" style="left:566px;top:269px;font-family:'Liberation Serif',serif;font-weight:bold;font-size:14px;line-height:14px;transform:scaleX(1.04);transform-origin:left">B</div>
<svg style="left:587px;top:270px" width="14" height="10" viewBox="0 0 14 10"><path d="M7.5 0 H13.5 V1.2 H7.5Z M0 7.8 H6 V9 H0Z M9.5 0 H12.5 L4 9 H1Z" fill="#000"/></svg>
<div class="a" style="left:612px;top:268px;font-family:'Liberation Serif',serif;font-weight:bold;font-size:12.5px;line-height:13px">U</div><div class="a" style="left:612px;top:280px;width:9px;height:1px;background:#000"></div>
<svg style="left:632px;top:267px" width="16" height="16" viewBox="0 0 16 16">
 <circle cx="9.5" cy="6" r="5.6" fill="#f4ec10" stroke="#111" stroke-width="1"/>
 <circle cx="7.5" cy="4" r="0.9" fill="#8020a0"/><circle cx="10" cy="3" r="0.9" fill="#d020c0"/><circle cx="12.3" cy="5.5" r="0.9" fill="#fff" stroke="#333" stroke-width="0.4"/><circle cx="11.8" cy="8.5" r="0.9" fill="#e02020"/><circle cx="8.5" cy="9.2" r="0.9" fill="#20b0d0"/>
 <path d="M0 15.5 L3.5 7.5 L7 15.5 M1.5 12.5 H5.5" stroke="#000" stroke-width="1.3" fill="none"/>
</svg>
<div class="a" style="left:656px;top:262px;width:2px;height:24px;background:#a0a0a0;border-right:1px solid #fff"></div>
<div class="a" style="left:667px;top:268px;width:8px;height:1px;background:#000"></div><div class="a" style="left:667px;top:270px;width:11px;height:1px;background:#000"></div><div class="a" style="left:667px;top:272px;width:8px;height:1px;background:#000"></div><div class="a" style="left:667px;top:274px;width:11px;height:1px;background:#000"></div><div class="a" style="left:667px;top:276px;width:8px;height:1px;background:#000"></div><div class="a" style="left:667px;top:278px;width:11px;height:1px;background:#000"></div><div class="a" style="left:694px;top:268px;width:5px;height:1px;background:#000"></div><div class="a" style="left:691px;top:270px;width:11px;height:1px;background:#000"></div><div class="a" style="left:693px;top:272px;width:7px;height:1px;background:#000"></div><div class="a" style="left:691px;top:274px;width:11px;height:1px;background:#000"></div><div class="a" style="left:694px;top:276px;width:5px;height:1px;background:#000"></div><div class="a" style="left:691px;top:278px;width:11px;height:1px;background:#000"></div><div class="a" style="left:717px;top:268px;width:8px;height:1px;background:#000"></div><div class="a" style="left:714px;top:270px;width:11px;height:1px;background:#000"></div><div class="a" style="left:717px;top:272px;width:8px;height:1px;background:#000"></div><div class="a" style="left:714px;top:274px;width:11px;height:1px;background:#000"></div><div class="a" style="left:717px;top:276px;width:8px;height:1px;background:#000"></div><div class="a" style="left:714px;top:278px;width:11px;height:1px;background:#000"></div><div class="a" style="left:737px;top:268px;width:11px;height:1px;background:#000"></div><div class="a" style="left:737px;top:270px;width:11px;height:1px;background:#000"></div><div class="a" style="left:737px;top:272px;width:11px;height:1px;background:#000"></div><div class="a" style="left:737px;top:274px;width:11px;height:1px;background:#000"></div><div class="a" style="left:737px;top:276px;width:11px;height:1px;background:#000"></div><div class="a" style="left:737px;top:278px;width:11px;height:1px;background:#000"></div>
<div class="a" style="left:759px;top:262px;width:2px;height:24px;background:#a0a0a0;border-right:1px solid #fff"></div>
<div class="a" style="left:768px;top:277px;width:16px;height:4px;background:#ffef00"></div>
<svg style="left:770px;top:265px" width="13" height="11" viewBox="0 0 13 11"><path d="M1 10 L2 7.5 L9.5 0.8 L12 3 L4.5 9.8Z" fill="#fff" stroke="#000" stroke-width="0.9"/><path d="M2.5 7.5 L9.5 1.5 L11 3 L4 9Z" fill="#30a040"/><path d="M2.2 7.8 L4 6.2 L5.5 7.8 L3.8 9.3Z" fill="#2040d0"/></svg>
<div class="a" style="left:795px;top:262px;width:2px;height:24px;background:#a0a0a0;border-right:1px solid #fff"></div>
<svg style="left:804px;top:266px" width="16" height="16" viewBox="0 0 16 16">
 <rect x="0.5" y="0.5" width="9.5" height="12.5" fill="#e8e8e0" stroke="#505050" stroke-width="1"/>
 <rect x="2" y="2" width="3" height="3.5" fill="#707070"/>
 <g transform="translate(10 10)">
  <path d="M-1.2 -5.5 H1.2 L1.6 -3.6 L3.2 -4.6 L4.6 -3.2 L3.6 -1.6 L5.5 -1.2 V1.2 L3.6 1.6 L4.6 3.2 L3.2 4.6 L1.6 3.6 L1.2 5.5 H-1.2 L-1.6 3.6 L-3.2 4.6 L-4.6 3.2 L-3.6 1.6 L-5.5 1.2 V-1.2 L-3.6 -1.6 L-4.6 -3.2 L-3.2 -4.6 L-1.6 -3.6Z" fill="#e8d820" stroke="#6a6000" stroke-width="0.8"/>
  <circle r="1.6" fill="#b8a800"/>
 </g>
</svg>


<div class="a" style="left:254px;top:292px;font-size:12px;line-height:15px;letter-spacing:0.134px">-&nbsp; Schema tipo fornito dal fabbricante del ponteggio</div>
<div class="a" style="left:254px;top:307px;font-size:12px;line-height:15px;letter-spacing:0.118px">-&nbsp; Certificato dei giunti ortogonali</div>
<div class="a" style="left:254px;top:322px;font-size:12px;line-height:15px;letter-spacing:-0.14px">$ALLEGATIVARIABILI$</div>

<div class="a" style="left:250px;top:817px;width:1020px;height:79px;background:#ffffe1;border:1px solid #a0a0a0;box-shadow:0 1px 0 #fff"></div>

<!-- status bar -->

<div class="a" style="left:1px;top:903px;width:959px;height:18px;border-top:1px solid #a0a0a0;border-left:1px solid #a0a0a0"></div>
<div class="a" style="left:963px;top:903px;width:66px;height:18px;border-top:1px solid #a0a0a0;border-left:1px solid #a0a0a0"></div>
<div class="a" style="left:1032px;top:903px;width:156px;height:18px;border-top:1px solid #a0a0a0;border-left:1px solid #a0a0a0"></div>
<div class="a" style="left:1191px;top:903px;width:33px;height:18px;border-top:1px solid #a0a0a0;border-left:1px solid #a0a0a0"></div>
<div class="a" style="left:1227px;top:903px;width:31px;height:18px;border-top:1px solid #a0a0a0;border-left:1px solid #a0a0a0"></div>
<svg style="left:1262px;top:908px" width="13" height="13" viewBox="0 0 13 13"><path d="M12 1 L1 12 M12 5 L5 12 M12 9 L9 12" stroke="#a0a0a0" stroke-width="1.5"/></svg>

<div class="a" style="letter-spacing:-0.325px;left:974px;top:906px;font-size:12px;line-height:14px">v. 22.01g</div>
<div class="a" style="letter-spacing:-0.333px;left:1194px;top:906px;font-size:12px;line-height:14px;color:#a0a0a0">MAIU</div>
<div class="a" style="letter-spacing:0.0px;left:1230px;top:906px;font-size:12px;line-height:14px">NUM</div>

<!-- window border -->
<div class="a" style="left:0;top:0;width:1276px;height:922px;border:1px solid #1f4a8a;pointer-events:none;z-index:50"></div>
</body></html>
